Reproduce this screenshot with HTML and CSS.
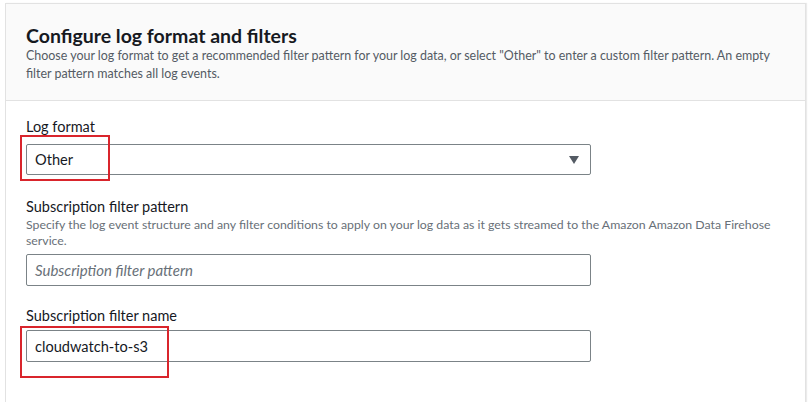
FILE: index.html
```html
<!DOCTYPE html>
<html>
<head>
<meta charset="utf-8">
<link rel="stylesheet" href="styles.css">
</head>
<body>
<div class="card">
  <div class="card-header">
    <h2 class="title">Configure log format and filters</h2>
    <p class="desc">Choose your log format to get a recommended filter pattern for your log data, or select "Other" to enter a custom filter pattern. An empty filter pattern matches all log events.</p>
  </div>
  <div class="card-body">
    <div class="field">
      <label class="label">Log format</label>
      <div class="control control-select">
        <div class="select">
          <span class="value">Other</span>
          <svg class="caret" width="10" height="8" viewBox="0 0 10 8"><polygon points="0,0 10,0 5,8" fill="#545b64"/></svg>
        </div>
        <span class="highlight hl-format"></span>
      </div>
    </div>
    <div class="field field-pattern">
      <label class="label">Subscription filter pattern</label>
      <p class="hint">Specify the log event structure and any filter conditions to apply on your log data as it gets streamed to the Amazon Amazon Data Firehose service.</p>
      <div class="control control-pattern">
        <div class="input placeholder">Subscription filter pattern</div>
      </div>
    </div>
    <div class="field field-name">
      <label class="label">Subscription filter name</label>
      <div class="control control-name">
        <div class="input">cloudwatch-to-s3</div>
        <span class="highlight hl-name"></span>
      </div>
    </div>
  </div>
</div>
</body>
</html>
```
FILE: styles.css
```css
html, body {
  margin: 0;
  padding: 0;
  background: #ffffff;
}
body {
  font-family: Lato, "Open Sans", sans-serif;
  color: #16191f;
  padding: 3px 4px 0 5px;
  height: 402px;
  overflow: hidden;
  box-sizing: border-box;
}
.card {
  border: 1px solid #e2e2e2;
  border-bottom: none;
  box-shadow: 1px 0 1px rgba(0,0,0,0.08);
  height: 420px;
}
.card-header {
  background: #fafafa;
  border-bottom: 1px solid #e2e2e2;
  padding: 20px 20px 0 20px;
  height: 76px;
}
.title {
  margin: 0;
  font-size: 19.5px;
  font-weight: 700;
  line-height: 24px;
  color: #16191f;
}
.desc {
  margin: -1px 0 0 0;
  font-size: 12.45px;
  line-height: 18px;
  color: #545b64;
}
.card-body {
  padding: 16px 20px 0 20px;
}
.field-pattern {
  margin-top: 22px;
}
.field-name {
  margin-top: 20px;
}
.label {
  display: block;
  font-size: 14.5px;
  line-height: 20px;
  color: #16191f;
}
.hint {
  margin: 0;
  font-size: 12.3px;
  line-height: 16px;
  color: #687078;
}
.control {
  width: 565px;
  position: relative;
}
.control-select {
  margin-top: 7px;
}
.control-pattern {
  margin-top: 5px;
}
.control-name {
  margin-top: 4px;
}
.select, .input {
  box-sizing: border-box;
  height: 32px;
  border: 1px solid #7b8387;
  border-radius: 2px;
  background: #fff;
  display: flex;
  align-items: center;
  padding: 0 8px;
  font-size: 14.6px;
  color: #16191f;
}
.select {
  height: 31px;
  justify-content: space-between;
}
.caret {
  margin-right: 3px;
}
.placeholder {
  font-style: italic;
  font-size: 15px;
  color: #687078;
}
.highlight {
  position: absolute;
  border: 2px solid #d9252c;
  pointer-events: none;
}
.hl-format {
  left: -6px;
  top: -9px;
  width: 86px;
  height: 42px;
}
.hl-name {
  left: -6px;
  top: -4px;
  width: 145px;
  height: 48px;
}
```
